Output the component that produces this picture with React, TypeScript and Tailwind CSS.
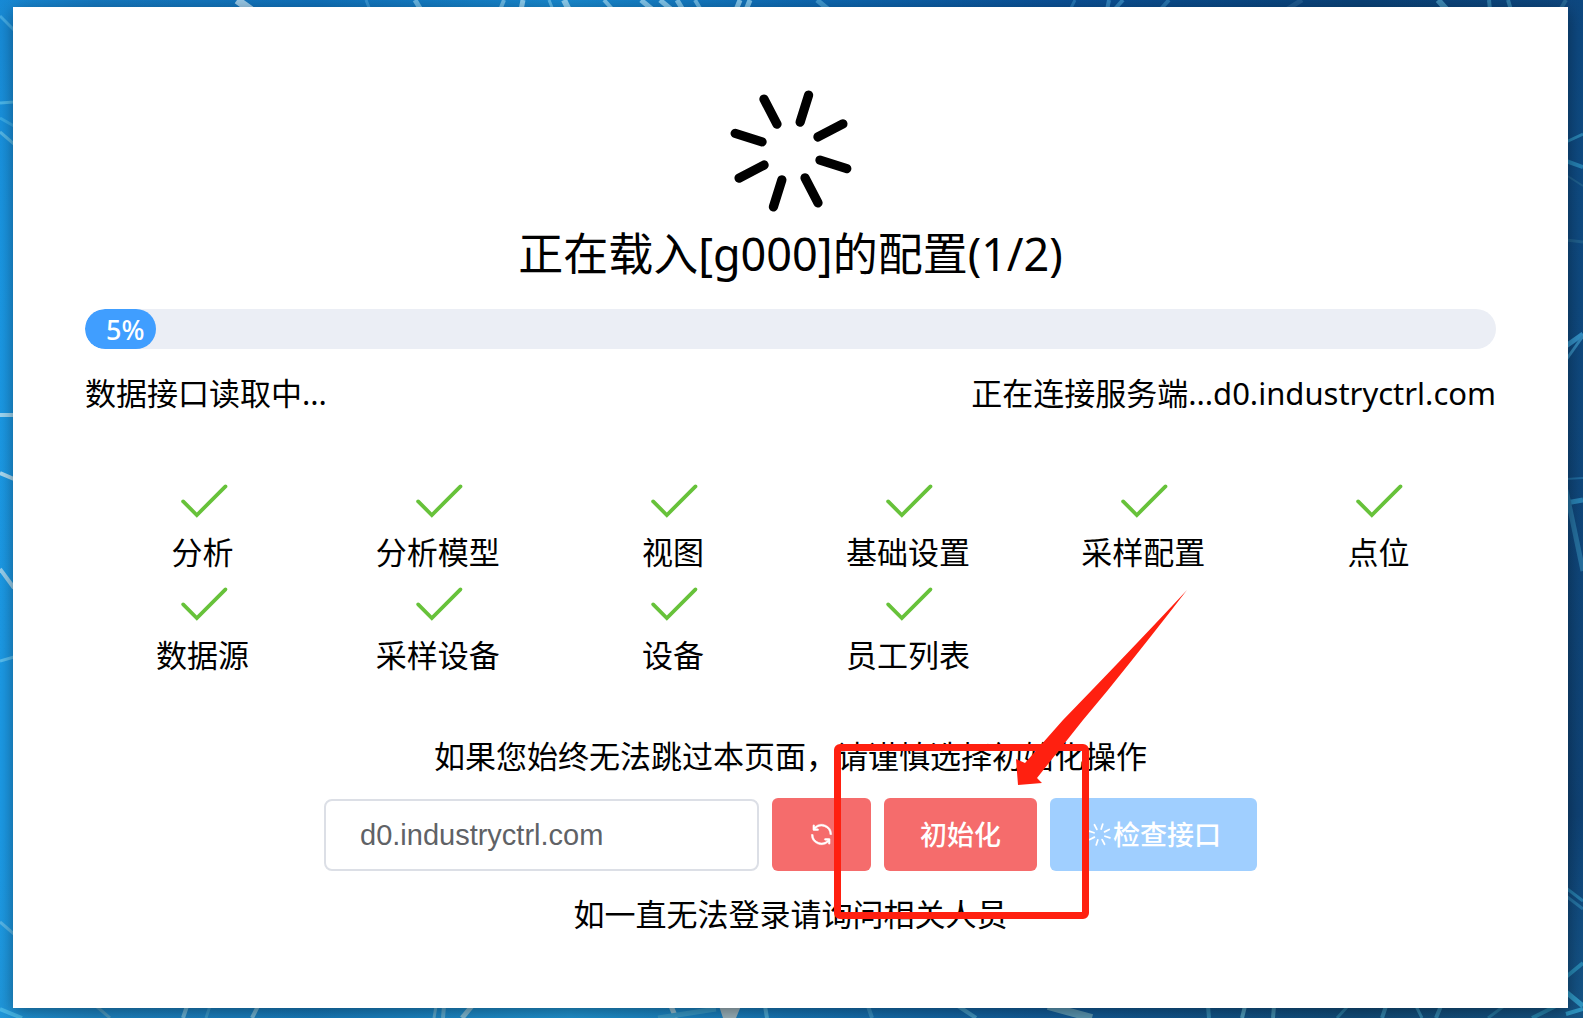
import { useState } from 'react'
import { clsx } from 'clsx'

type Line = [x1: number, y1: number, x2: number, y2: number, width: number, color: string]

const items = [
  '分析',
  '分析模型',
  '视图',
  '基础设置',
  '采样配置',
  '点位',
  '数据源',
  '采样设备',
  '设备',
  '员工列表',
]

const lines: Line[] = [
  [237, 0, 251, 10, 8, '#b9dcef'],
  [366, 0, 370, 10, 3, '#3d9bd8'],
  [415, 0, 421, 10, 5, '#7cc4ea'],
  [504, 0, 500, 10, 4, '#7cc4ea'],
  [523, 0, 521, 10, 5, '#a6dcf5'],
  [549, 0, 553, 10, 3, '#6cc3ee'],
  [564, 0, 569, 10, 6, '#a9dff7'],
  [604, 0, 613, 10, 4, '#8fd0f0'],
  [641, 0, 653, 10, 5, '#9bd6f3'],
  [660, 0, 672, 10, 5, '#9bd6f3'],
  [677, 0, 683, 10, 5, '#8fd0f0'],
  [695, 0, 701, 10, 4, '#7cc4ea'],
  [740, 0, 736, 10, 5, '#9bd6f3'],
  [750, 0, 746, 10, 5, '#8fd0f0'],
  [817, 0, 829, 10, 5, '#4ba3d8'],
  [1075, 0, 1070, 10, 3, '#2b7dbb'],
  [1109, 0, 1107, 10, 4, '#3b8fc8'],
  [1123, 0, 1114, 10, 4, '#3b8fc8'],
  [1169, 0, 1160, 10, 4, '#2f7fb8'],
  [1302, 0, 1286, 10, 5, '#255f94'],
  [1438, 0, 1447, 10, 6, '#4b9bc4'],
  [1489, 0, 1490, 10, 4, '#3b8ab5'],
  [1508, 0, 1511, 10, 4, '#3b8ab5'],
  [1566, 0, 1560, 10, 4, '#2b6f9b'],
  [0, 16, 14, 30, 3, '#4db4ea'],
  [0, 103, 14, 102, 3, '#58c0ee'],
  [0, 118, 14, 126, 3, '#3fb0ea'],
  [0, 132, 14, 144, 3, '#62bfe8'],
  [0, 415, 14, 415, 4, '#bfe6f7'],
  [0, 473, 14, 479, 4, '#cdeaf5'],
  [0, 569, 14, 588, 4, '#b5dcee'],
  [0, 661, 14, 657, 3, '#66c6f2'],
  [0, 922, 14, 934, 3, '#63bdea'],
  [0, 1009, 22, 1018, 4, '#4fc0ee'],
  [1566, 142, 1583, 134, 3, '#2f8fbc'],
  [1566, 161, 1583, 167, 4, '#2b8dbd'],
  [1566, 175, 1583, 186, 2, '#23648f'],
  [1566, 240, 1583, 242, 3, '#23648f'],
  [1566, 346, 1583, 334, 5, '#3a9fd4'],
  [1566, 360, 1583, 336, 3, '#3a93c4'],
  [1566, 479, 1583, 478, 2, '#2573a6'],
  [1566, 503, 1583, 500, 5, '#2f8fc0'],
  [1566, 490, 1583, 571, 5, '#2b7aa8'],
  [1566, 888, 1583, 901, 3, '#2a86b4'],
  [1566, 896, 1583, 909, 3, '#2a7cab'],
  [1566, 977, 1583, 963, 4, '#2b93bd'],
  [1566, 992, 1583, 1006, 5, '#35a5d0'],
  [1566, 1014, 1583, 1009, 4, '#35a5d0'],
  [96, 1006, 110, 1018, 3, '#5aa2c4'],
  [187, 1006, 183, 1018, 4, '#7cc0de'],
  [210, 1006, 206, 1018, 3, '#3f9fd0'],
  [258, 1006, 252, 1018, 4, '#86c2da'],
  [436, 1006, 434, 1018, 3, '#6db4d4'],
  [444, 1006, 443, 1018, 4, '#6db4d4'],
  [472, 1006, 462, 1018, 5, '#9ac7d8'],
  [671, 1006, 676, 1018, 5, '#b0cdd6'],
  [716, 1009, 658, 1018, 5, '#3fa0cc'],
  [765, 1006, 767, 1018, 4, '#58b4dc'],
  [868, 1006, 872, 1018, 4, '#3f97c8'],
  [958, 1006, 976, 1018, 4, '#4fa5cc'],
  [1048, 1006, 1092, 1018, 8, '#6fa9bd'],
  [1208, 1006, 1209, 1018, 4, '#3b93bb'],
  [1245, 1006, 1242, 1018, 4, '#5fb0cc'],
  [1274, 1006, 1273, 1018, 4, '#4f9dbb'],
  [1348, 1006, 1337, 1018, 3, '#2f84ab'],
  [1386, 1006, 1382, 1018, 4, '#3b93bb'],
  [1416, 1006, 1422, 1018, 3, '#3b93bb'],
  [1441, 1006, 1436, 1018, 4, '#3b93bb'],
  [1504, 1006, 1488, 1018, 3, '#2b7fa8'],
  [1556, 1006, 1532, 1018, 4, '#2b8fb8'],
]

function Backdrop() {
  return (
    <svg
      className="absolute inset-0 size-full"
      viewBox="0 0 1583 1018"
      preserveAspectRatio="none"
      aria-hidden="true"
    >
      <defs>
        <linearGradient id="sky">
          <stop offset="0" stopColor="#1c9ae6" />
          <stop offset="0.06" stopColor="#1a84ca" />
          <stop offset="0.2" stopColor="#1279c2" />
          <stop offset="0.36" stopColor="#1d98dc" />
          <stop offset="0.5" stopColor="#1070b8" />
          <stop offset="0.66" stopColor="#0b4f93" />
          <stop offset="0.86" stopColor="#0a3a69" />
          <stop offset="1" stopColor="#0f4274" />
        </linearGradient>
        <linearGradient id="shade" x1="0" y1="0" x2="0" y2="1">
          <stop offset="0" stopColor="#0a5aa5" stopOpacity="0.25" />
          <stop offset="0.3" stopColor="#0f86d8" stopOpacity="0.1" />
          <stop offset="0.8" stopColor="#1f9ee8" stopOpacity="0" />
          <stop offset="1" stopColor="#2a8cb8" stopOpacity="0.25" />
        </linearGradient>
      </defs>
      <rect width="1583" height="1018" fill="url(#sky)" />
      <rect width="1583" height="1018" fill="url(#shade)" />
      <g opacity="0.8">
        {lines.map(([x1, y1, x2, y2, width, color], i) => (
          <line key={i} x1={x1} y1={y1} x2={x2} y2={y2} stroke={color} strokeWidth={width} />
        ))}
      </g>
      <path d="M719 1006h22l-5 12h-13z" fill="#9db4bd" />
    </svg>
  )
}

function LoadingIcon({ className }: { className?: string }) {
  return (
    <svg className={className} viewBox="0 0 1024 1024" aria-hidden="true">
      <g
        stroke="currentColor"
        strokeWidth="66"
        strokeLinecap="round"
        transform="rotate(17.5 512 512)"
      >
        {[0, 45, 90, 135, 180, 225, 270, 315].map((angle) => (
          <line key={angle} x1="512" y1="96" x2="512" y2="296" transform={`rotate(${angle} 512 512)`} />
        ))}
      </g>
    </svg>
  )
}

function CheckIcon() {
  return (
    <svg className="size-[60px] text-[#67c23a]" viewBox="0 0 1024 1024" aria-hidden="true">
      <path
        fill="currentColor"
        d="M406.656 706.944 195.84 496.256a32 32 0 1 0-45.248 45.248l256 256 512-512a32 32 0 0 0-45.248-45.248L406.592 706.944z"
      />
    </svg>
  )
}

function RefreshIcon() {
  return (
    <svg className="size-[27px]" viewBox="0 0 1024 1024" aria-hidden="true">
      <path
        fill="currentColor"
        stroke="currentColor"
        strokeWidth="20"
        d="M771.776 794.88A384 384 0 0 1 128 512h64a320 320 0 0 0 555.712 216.448H654.72a32 32 0 1 1 0-64h149.056a32 32 0 0 1 32 32v148.928a32 32 0 1 1-64 0v-50.56zM276.288 295.616h92.992a32 32 0 0 1 0 64H220.16a32 32 0 0 1-32-32V178.56a32 32 0 0 1 64 0v50.56A384 384 0 0 1 896.128 512h-64a320 320 0 0 0-555.776-216.384z"
      />
    </svg>
  )
}

// red frame and arrow pointing at the init button
function Marker() {
  return (
    <div className="pointer-events-none">
      <div className="absolute top-[-54px] left-[-50px] h-[175px] w-[255px] rounded-md border-7 border-[#ff2010]" />
      <svg
        className="absolute top-[-208px] left-[131px] h-[196px] w-[173px]"
        viewBox="0 0 173 196"
        aria-hidden="true"
      >
        <path
          fill="#ff2010"
          d="M172 0 Q130 45 77 100 L48 130 L10 173 L1 169 L3 195 L27 193 L22 188 L68 130 L93 100 Q135 48 172 0z"
        />
      </svg>
    </div>
  )
}

type ButtonProps = React.ComponentProps<'button'> & {
  variant: 'danger' | 'primary'
}

function Button({ variant, className, ...props }: ButtonProps) {
  return (
    <button
      type="button"
      className={clsx(
        'flex h-[73px] items-center justify-center rounded-md px-9 text-[27px] font-medium whitespace-nowrap text-white',
        variant === 'danger' && 'bg-[#f56c6c]',
        variant === 'primary' && 'bg-[#409eff] disabled:bg-[#a0cfff]',
        className,
      )}
      {...props}
    />
  )
}

export default function App() {
  const [host, setHost] = useState('d0.industryctrl.com')
  const percentage = 5

  return (
    <div className="relative min-h-screen pt-[7px] pr-[15px] pb-[10px] pl-[13px] font-['Noto_Sans','Noto_Sans_CJK_SC',sans-serif] text-black">
      <Backdrop />

      <main className="relative flex flex-col bg-white p-[72px] text-[31px] leading-[43px] shadow-[0_4px_16px_rgba(0,0,0,0.4)]">
        <LoadingIcon className="size-[144px] self-center" />
        <h1 className="text-center text-[45px] leading-[62px]">正在载入[g000]的配置(1/2)</h1>

        <div
          role="progressbar"
          aria-valuenow={percentage}
          aria-label="数据接口读取中"
          className="mt-6 h-10 overflow-hidden rounded-full bg-[#ebeef5]"
        >
          <div
            className="flex h-full items-center justify-end rounded-full bg-[#409eff] pr-[11px] text-[27px] font-medium text-white"
            style={{ width: `${percentage}%` }}
          >
            {percentage}%
          </div>
        </div>

        <div className="mt-[23px] flex justify-between">
          <span>数据接口读取中...</span>
          <span>正在连接服务端...d0.industryctrl.com</span>
        </div>

        <ul className="mt-14 grid grid-cols-6">
          {items.map((item) => (
            <li key={item} className="flex flex-col items-center">
              <CheckIcon />
              {item}
            </li>
          ))}
        </ul>

        <p className="mt-[58px] text-center">如果您始终无法跳过本页面，请谨慎选择初始化操作</p>

        <div className="mt-5 flex items-end justify-center gap-[13px]">
          <input
            type="text"
            aria-label="服务端地址"
            value={host}
            onChange={(e) => setHost(e.target.value)}
            className="h-[72px] w-[435px] rounded-lg border-2 border-[#dcdfe6] px-[34px] font-['Liberation_Sans',sans-serif] text-[29px] text-[#606266] outline-none"
          />
          <Button variant="danger" aria-label="刷新">
            <RefreshIcon />
          </Button>
          <div className="relative z-10">
            <Button variant="danger">初始化</Button>
            <Marker />
          </div>
          <Button variant="primary" disabled>
            <LoadingIcon className="size-[27px]" />
            检查接口
          </Button>
        </div>

        <p className="mt-[22px] text-center">如一直无法登录请询问相关人员</p>
      </main>
    </div>
  )
}
